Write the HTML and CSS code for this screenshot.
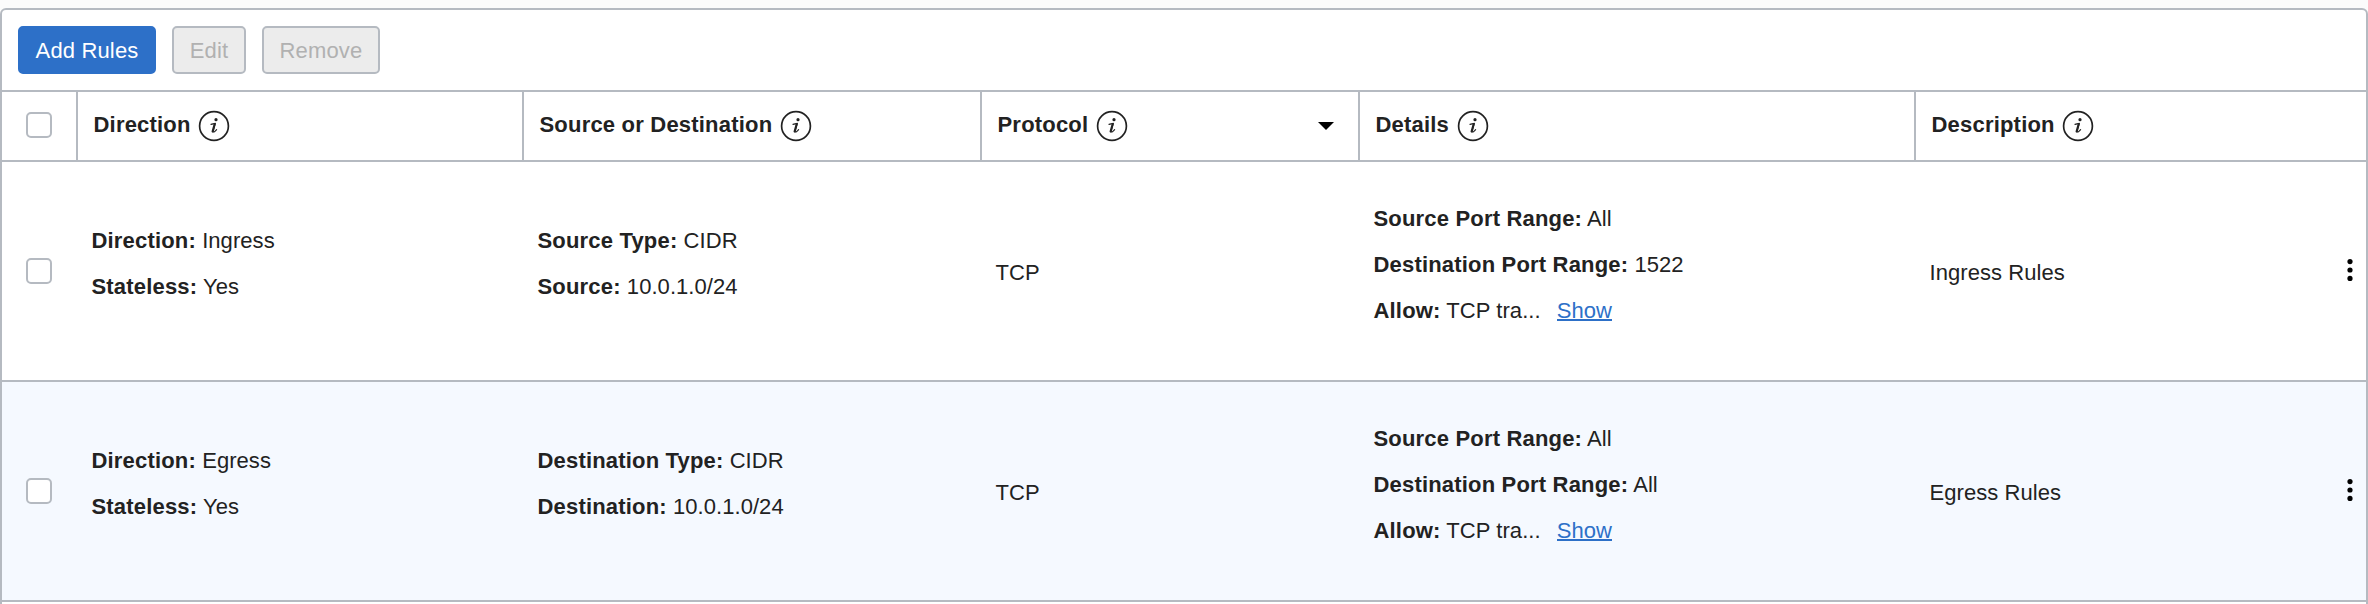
FILE: index.html
```html
<!DOCTYPE html>
<html lang="en">
<head>
<meta charset="utf-8">
<title>Security Rules</title>
<link rel="stylesheet" href="styles.css">
</head>
<body>
<svg class="defs" width="0" height="0" aria-hidden="true">
  <symbol id="info" viewBox="0 0 32 32">
    <circle cx="16" cy="16" r="14.4" fill="none" stroke="currentColor" stroke-width="1.7"/>
    <circle cx="18" cy="9.7" r="1.6" fill="currentColor"/>
    <path d="M13 14.4Q15 13.9 17.4 13.4L15.1 21Q15.1 22.4 16.4 21.8Q17.4 21.1 18.6 19.6" fill="none" stroke="currentColor" stroke-width="1.2" stroke-linecap="round" stroke-linejoin="round"/>
    <path d="M16.6 14.2L14.6 21.6" fill="none" stroke="currentColor" stroke-width="2.1" stroke-linecap="round"/>
  </symbol>
  <symbol id="kebab" viewBox="0 0 8 24">
    <circle cx="4" cy="3.6" r="2.6"/><circle cx="4" cy="12" r="2.6"/><circle cx="4" cy="20.4" r="2.6"/>
  </symbol>
</svg>
<main class="panel">
  <div class="toolbar">
    <button class="btn btn-primary">Add Rules</button>
    <button class="btn btn-edit" disabled>Edit</button>
    <button class="btn btn-remove" disabled>Remove</button>
  </div>
  <div class="row head">
    <div class="cell check"><span class="box"></span></div>
    <div class="cell">Direction<svg class="info"><use href="#info"/></svg></div>
    <div class="cell">Source or Destination<svg class="info"><use href="#info"/></svg></div>
    <div class="cell">Protocol<svg class="info"><use href="#info"/></svg><svg class="caret" viewBox="0 0 16 8"><path d="M0 0H16L8 8Z"/></svg></div>
    <div class="cell">Details<svg class="info"><use href="#info"/></svg></div>
    <div class="cell">Description<svg class="info"><use href="#info"/></svg></div>
  </div>
  <div class="row body">
    <div class="cell check"><span class="box"></span></div>
    <div class="cell lines"><p><b>Direction:</b> Ingress</p><p><b>Stateless:</b> Yes</p></div>
    <div class="cell lines"><p><b>Source Type:</b> CIDR</p><p><b>Source:</b> 10.0.1.0/24</p></div>
    <div class="cell single">TCP</div>
    <div class="cell lines ports"><p><b>Source Port Range:</b> All</p><p><b>Destination Port Range:</b> 1522</p><p><b>Allow:</b> TCP tra...<a class="show" href="#">Show</a></p></div>
    <div class="cell single">Ingress Rules<svg class="kebab"><use href="#kebab"/></svg></div>
  </div>
  <div class="row body striped">
    <div class="cell check"><span class="box"></span></div>
    <div class="cell lines"><p><b>Direction:</b> Egress</p><p><b>Stateless:</b> Yes</p></div>
    <div class="cell lines"><p><b>Destination Type:</b> CIDR</p><p><b>Destination:</b> 10.0.1.0/24</p></div>
    <div class="cell single">TCP</div>
    <div class="cell lines ports"><p><b>Source Port Range:</b> All</p><p><b>Destination Port Range:</b> All</p><p><b>Allow:</b> TCP tra...<a class="show" href="#">Show</a></p></div>
    <div class="cell single">Egress Rules<svg class="kebab"><use href="#kebab"/></svg></div>
  </div>
</main>
</body>
</html>
```
FILE: styles.css
```css
* { box-sizing: border-box; }
body {
  margin: 0;
  padding-top: 8px;
  height: 604px;
  overflow: hidden;
  background: #fbfbfb;
  color: #222;
  font: 22px/26px "Liberation Sans", Arial, sans-serif;
  letter-spacing: 0.06px;
}
.defs { display: block; position: absolute; }
.panel {
  height: 620px;
  border: 2px solid #b5bac1;
  border-radius: 6px;
  background: #fff;
}
.toolbar {
  display: flex;
  gap: 16px;
  height: 82px;
  padding: 16px;
  border-bottom: 2px solid #b5bac1;
}
.btn {
  width: 138px;
  height: 48px;
  padding: 2px 0 0;
  border: 2px solid #b5bac1;
  border-radius: 5px;
  background: #ececec;
  color: #b1b1b1;
  font: inherit;
  letter-spacing: 0.15px;
}
.btn-primary { border-color: #2d70c8; background: #2d70c8; color: #fff; }
.btn-edit { width: 74px; }
.btn-remove { width: 118px; }

.row {
  display: grid;
  grid-template-columns: 76px 446px 458px 378px 556px 1fr;
  border-bottom: 2px solid #b5bac1;
}
.cell { display: flex; align-items: center; }
.box {
  width: 26px;
  height: 26px;
  border: 2px solid #b5bac1;
  border-radius: 5px;
  background: #fff;
}
.head { height: 70px; font-weight: bold; letter-spacing: 0.2px; }
.head .cell { padding: 0 24px 2px 15.5px; border-right: 2px solid #b5bac1; }
.head .cell:last-child { border-right: 0; }
.head .check { padding: 0 0 2px 24px; }
.info { width: 32px; height: 32px; margin: 2px 0 0 7.5px; }
.caret { width: 16px; height: 8px; margin: 2px 0 0 auto; fill: #000; }

.body { height: 220px; }
.striped { background: #f5f9ff; }
.body .cell { padding-left: 13.5px; }
.body .check { padding-left: 24px; }
.lines { flex-direction: column; justify-content: center; align-items: flex-start; gap: 20px; }
.body .lines { padding-bottom: 14px; }
.body .ports { padding-bottom: 12px; }
.lines p { margin: 0; white-space: nowrap; }
.lines b { letter-spacing: 0.18px; }
.single { padding-top: 4px; }
.show {
  display: inline-block;
  height: 23px;
  margin-left: 16px;
  border-bottom: 2px solid #2d70c8;
  color: #2d70c8;
  text-decoration: none;
}
.kebab { width: 8px; height: 24px; margin: 0 12px 6px auto; fill: #000; }
```
